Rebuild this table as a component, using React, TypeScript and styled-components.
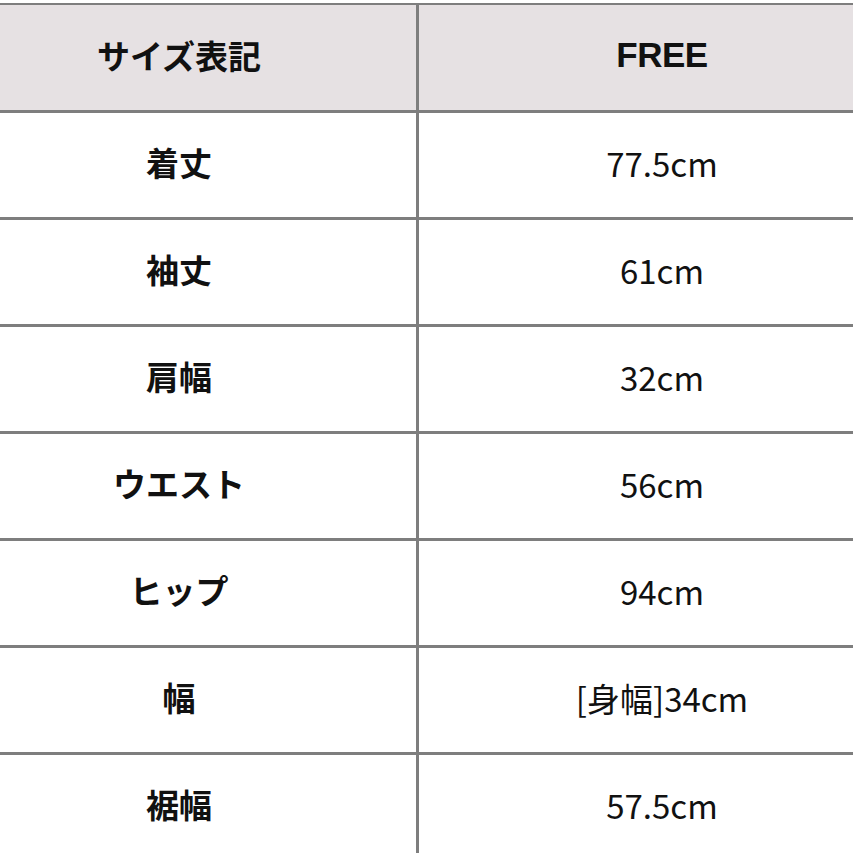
import React from "react"
import styled, { createGlobalStyle } from "styled-components"

const GlobalStyle = createGlobalStyle`
  html, body {
    margin: 0;
    padding: 0;
    background: #ffffff;
    overflow: hidden;
  }
`

const rows = [
  { label: "着丈", value: "77.5cm" },
  { label: "袖丈", value: "61cm" },
  { label: "肩幅", value: "32cm" },
  { label: "ウエスト", value: "56cm" },
  { label: "ヒップ", value: "94cm" },
  { label: "幅", value: "[身幅]34cm" },
  { label: "裾幅", value: "57.5cm" },
]

const App = () => (
  <>
    <GlobalStyle />
    <Page>
      <SizeTable>
        <HeadCell $left>サイズ表記</HeadCell>
        <HeadCell>
          <Latin>FREE</Latin>
        </HeadCell>
        {rows.map(row => (
          <React.Fragment key={row.label}>
            <LabelCell>{row.label}</LabelCell>
            <ValueCell>{row.value}</ValueCell>
          </React.Fragment>
        ))}
      </SizeTable>
    </Page>
  </>
)

export default App

const line = "#7e7e7e"

const Page = styled.div`
  width: 853px;
  height: 853px;
  padding-top: 3px;
  box-sizing: border-box;
  overflow: hidden;
`

const SizeTable = styled.div`
  display: grid;
  grid-template-columns: 419px 1fr;
  grid-auto-rows: 107px;
  grid-template-rows: 108px;
  border-top: 2px solid ${line};
  font-family: "Noto Sans CJK JP", "Noto Sans", sans-serif;
  color: #111111;
`

const Cell = styled.div<{ $left?: boolean }>`
  display: flex;
  align-items: center;
  justify-content: center;
  box-sizing: border-box;
  border-bottom: 3px solid ${line};
  border-right: ${p => (p.$left ? `3px solid ${line}` : "none")};
  padding: ${p => (p.$left ? "0 58px 6px 0" : "0 0 5px 52px")};
  white-space: nowrap;
`

const HeadCell = styled(Cell)`
  background: #e6e1e3;
  font-size: 33px;
  font-weight: 700;
`

const Latin = styled.span`
  font-family: "Liberation Sans", Arial, sans-serif;
  font-size: 35px;
  font-weight: 700;
  letter-spacing: -0.5px;
`

const LabelCell = styled(Cell).attrs({ $left: true })`
  font-size: 33px;
  font-weight: 700;
`

const ValueCell = styled(Cell)`
  font-size: 33px;
  font-weight: 400;
`
